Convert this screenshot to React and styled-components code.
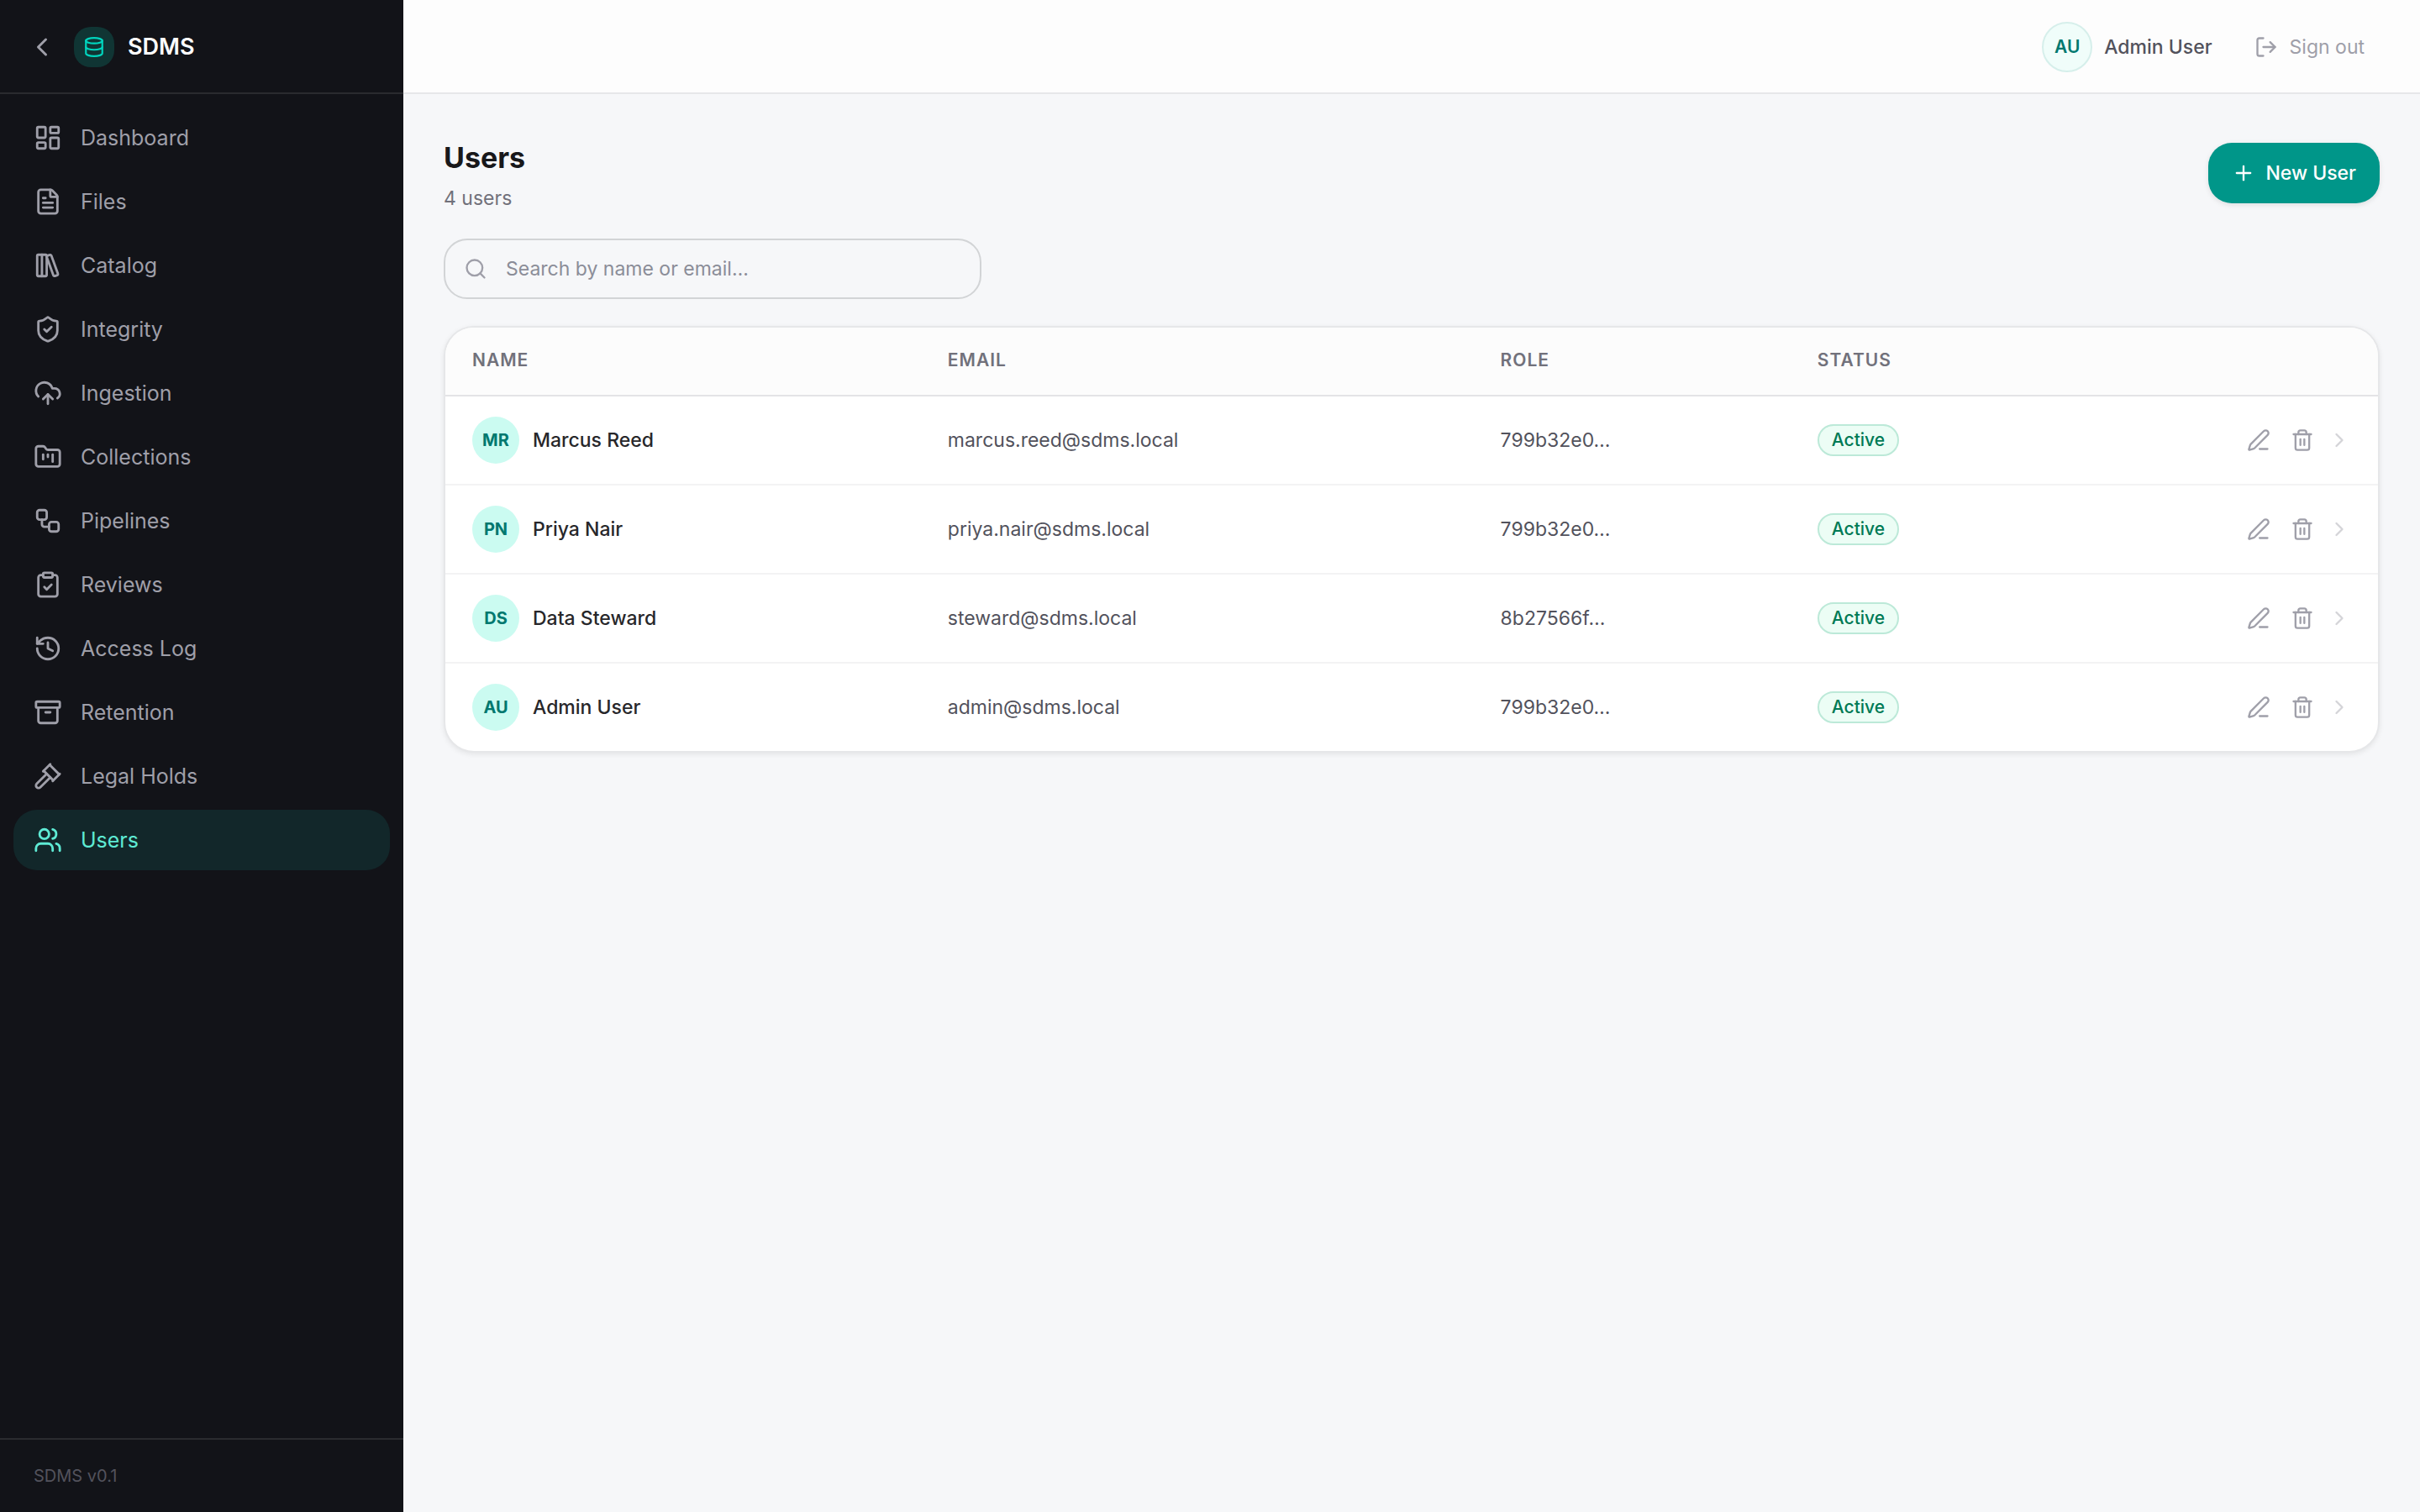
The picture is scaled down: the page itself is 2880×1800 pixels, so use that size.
import React, { useState } from "react";
import styled, { createGlobalStyle } from "styled-components";
import {
  Archive,
  ChevronLeft,
  ChevronRight,
  ClipboardCheck,
  CloudUpload,
  Database,
  FileText,
  FolderKanban,
  Gavel,
  History,
  LayoutDashboard,
  LibraryBig,
  LogOut,
  PenLine,
  Plus,
  Search,
  ShieldCheck,
  Trash2,
  Users,
  Workflow,
} from "lucide-react";

const GlobalStyle = createGlobalStyle`
  *, *::before, *::after { box-sizing: border-box; }
  body {
    margin: 0;
    background: #f6f7f9;
    color: #27272a;
    font-family: Inter, "Liberation Sans", sans-serif;
    font-size: 23px;
    line-height: 32px;
    -webkit-font-smoothing: antialiased;
  }
  button, input { font: inherit; color: inherit; }
  button { cursor: pointer; }
  svg { flex: none; display: block; }
`;

const Shell = styled.div`
  display: flex;
  min-height: 100vh;
`;

const Sidebar = styled.aside`
  position: sticky;
  top: 0;
  display: flex;
  flex-direction: column;
  flex: none;
  width: 480px;
  height: 100vh;
  background: #121318;
`;

const Brand = styled.div`
  display: flex;
  align-items: center;
  gap: 16px;
  height: 112px;
  padding: 2px 28px 0;
  border-bottom: 2px solid #2a2b2f;
`;

const CollapseButton = styled.button`
  display: grid;
  place-items: center;
  width: 44px;
  height: 44px;
  padding: 0;
  border: 0;
  background: none;
  color: #9f9fa9;
`;

const Logo = styled.span`
  display: grid;
  place-items: center;
  width: 48px;
  height: 48px;
  border-radius: 20px;
  background: #103534;
  color: #00d5be;
`;

const BrandName = styled.span`
  color: #ffffff;
  font-size: 27px;
  font-weight: 600;
`;

const Nav = styled.nav`
  display: flex;
  flex: 1;
  flex-direction: column;
  gap: 4px;
  padding: 16px;
`;

const NavLink = styled.a`
  display: flex;
  align-items: center;
  gap: 22px;
  height: 72px;
  padding: 0 24px;
  border-radius: 28px;
  background: ${(p) => (p.$active ? "#12272a" : "transparent")};
  color: ${(p) => (p.$active ? "#5eead4" : "#9f9fa9")};
  font-size: 25px;
  text-decoration: none;
`;

const SidebarFooter = styled.footer`
  padding: 28px 40px;
  border-top: 2px solid #2a2b2f;
  color: #52525c;
  font-size: 20px;
  line-height: 30px;
`;

const Page = styled.div`
  display: flex;
  flex: 1;
  flex-direction: column;
  min-width: 0;
`;

const TopBar = styled.header`
  display: flex;
  align-items: center;
  justify-content: flex-end;
  gap: 32px;
  height: 112px;
  padding: 2px 48px 0;
  border-bottom: 2px solid #e6e7e9;
  background: #fdfdfd;
`;

const Account = styled.div`
  display: flex;
  align-items: center;
  gap: 14px;
  color: #52525c;
  font-weight: 500;
`;

const Avatar = styled.span`
  display: grid;
  place-items: center;
  flex: none;
  width: ${(p) => (p.$outlined ? 60 : 56)}px;
  height: ${(p) => (p.$outlined ? 60 : 56)}px;
  border: ${(p) => (p.$outlined ? "2px solid #d6efeb" : "0")};
  border-radius: 50%;
  background: ${(p) => (p.$outlined ? "#f0fdfa" : "#cbfbf1")};
  color: #00786f;
  font-size: ${(p) => (p.$outlined ? 21 : 20)}px;
  font-weight: ${(p) => (p.$outlined ? 600 : 700)};
`;

const SignOut = styled.button`
  display: flex;
  align-items: center;
  gap: 14px;
  padding: 12px 18px;
  border: 0;
  background: none;
  color: #9f9fa9;
`;

const Content = styled.main`
  display: flex;
  flex-direction: column;
  gap: 32px;
  padding: 48px;
`;

const PageHeader = styled.div`
  display: flex;
  align-items: center;
  justify-content: space-between;
`;

const Heading = styled.div`
  display: flex;
  flex-direction: column;
  gap: 4px;
`;

const Title = styled.h1`
  margin: 0;
  color: #18181b;
  font-size: 34px;
  font-weight: 700;
  line-height: 56px;
`;

const Subtitle = styled.p`
  margin: 0;
  color: #71717b;
`;

const PrimaryButton = styled.button`
  display: flex;
  align-items: center;
  gap: 12px;
  height: 72px;
  padding: 0 28px;
  border: 0;
  border-radius: 28px;
  background: #009689;
  box-shadow: 0 2px 6px rgba(0, 0, 0, 0.1);
  color: #ffffff;
  font-weight: 500;
`;

const SearchBox = styled.label`
  display: flex;
  align-items: center;
  gap: 22px;
  width: 100%;
  max-width: 640px;
  height: 72px;
  padding: 0 22px;
  border: 2px solid #d2d4d6;
  border-radius: 28px;
  color: #9f9fa9;
`;

const SearchInput = styled.input`
  flex: 1;
  min-width: 0;
  padding: 0;
  border: 0;
  outline: 0;
  background: transparent;
  color: #27272a;
  &::placeholder {
    color: #8b8d98;
    opacity: 1;
  }
`;

const Card = styled.div`
  overflow: hidden;
  border: 2px solid #e6e7e9;
  border-radius: 36px;
  background: #ffffff;
  box-shadow: 0 2px 6px rgba(0, 0, 0, 0.08);
`;

const Table = styled.table`
  width: 100%;
  border-collapse: separate;
  border-spacing: 0;
  table-layout: fixed;
  text-align: left;
`;

const HeadCell = styled.th`
  width: ${(p) => p.$width || "auto"};
  padding: 25px 32px 27px;
  border-bottom: 2px solid #e4e4e6;
  background: #fcfcfc;
  color: #71717b;
  font-size: 21px;
  font-weight: 600;
  line-height: 28px;
  letter-spacing: 1px;
  text-transform: uppercase;
`;

const Cell = styled.td`
  padding: 24px 32px;
  color: #52525c;
  tr:not(:last-child) > & {
    border-bottom: 2px solid #f3f3f4;
  }
`;

const Person = styled.div`
  display: flex;
  align-items: center;
  gap: 16px;
  color: #27272a;
  font-weight: 500;
`;

const StatusBadge = styled.span`
  display: flex;
  align-items: center;
  width: fit-content;
  height: 38px;
  padding: 0 15px;
  border: 2px solid #bce9d8;
  border-radius: 19px;
  background: #ecfdf5;
  color: #007a55;
  font-size: 21px;
  font-weight: 500;
`;

const Actions = styled.div`
  display: flex;
  align-items: center;
  justify-content: flex-end;
  gap: 8px;
  color: #d4d4d8;
`;

const IconButton = styled.button`
  padding: 8px;
  border: 0;
  background: none;
  color: #9f9fa9;
`;

const NAV_ITEMS = [
  ["Dashboard", LayoutDashboard],
  ["Files", FileText],
  ["Catalog", LibraryBig],
  ["Integrity", ShieldCheck],
  ["Ingestion", CloudUpload],
  ["Collections", FolderKanban],
  ["Pipelines", Workflow],
  ["Reviews", ClipboardCheck],
  ["Access Log", History],
  ["Retention", Archive],
  ["Legal Holds", Gavel],
  ["Users", Users],
];

const USERS = [
  { initials: "MR", name: "Marcus Reed", email: "marcus.reed@sdms.local", role: "799b32e0…" },
  { initials: "PN", name: "Priya Nair", email: "priya.nair@sdms.local", role: "799b32e0…" },
  { initials: "DS", name: "Data Steward", email: "steward@sdms.local", role: "8b27566f…" },
  { initials: "AU", name: "Admin User", email: "admin@sdms.local", role: "799b32e0…" },
];

function UserRow({ user }) {
  return (
    <tr>
      <Cell>
        <Person>
          <Avatar>{user.initials}</Avatar>
          {user.name}
        </Person>
      </Cell>
      <Cell>{user.email}</Cell>
      <Cell>{user.role}</Cell>
      <Cell>
        <StatusBadge>Active</StatusBadge>
      </Cell>
      <Cell>
        <Actions>
          <IconButton type="button" aria-label={`Edit ${user.name}`}>
            <PenLine size={28} strokeWidth={2} />
          </IconButton>
          <IconButton type="button" aria-label={`Delete ${user.name}`}>
            <Trash2 size={28} strokeWidth={2} />
          </IconButton>
          <ChevronRight size={28} strokeWidth={2} />
        </Actions>
      </Cell>
    </tr>
  );
}

export default function App() {
  const [query, setQuery] = useState("");
  const needle = query.trim().toLowerCase();
  const visible = USERS.filter((u) => `${u.name} ${u.email}`.toLowerCase().includes(needle));

  return (
    <>
      <GlobalStyle />
      <Shell>
        <Sidebar>
          <Brand>
            <CollapseButton type="button" aria-label="Collapse sidebar">
              <ChevronLeft size={36} strokeWidth={2} />
            </CollapseButton>
            <Logo>
              <Database size={26} strokeWidth={2} />
            </Logo>
            <BrandName>SDMS</BrandName>
          </Brand>
          <Nav>
            {NAV_ITEMS.map(([label, Icon]) => (
              <NavLink
                key={label}
                href="#"
                $active={label === "Users"}
                aria-current={label === "Users" ? "page" : undefined}
              >
                <Icon size={34} strokeWidth={2} />
                {label}
              </NavLink>
            ))}
          </Nav>
          <SidebarFooter>SDMS v0.1</SidebarFooter>
        </Sidebar>
        <Page>
          <TopBar>
            <Account>
              <Avatar $outlined>AU</Avatar>
              Admin User
            </Account>
            <SignOut type="button">
              <LogOut size={28} strokeWidth={2} />
              Sign out
            </SignOut>
          </TopBar>
          <Content>
            <PageHeader>
              <Heading>
                <Title>Users</Title>
                <Subtitle>4 users</Subtitle>
              </Heading>
              <PrimaryButton type="button">
                <Plus size={28} strokeWidth={2} />
                New User
              </PrimaryButton>
            </PageHeader>
            <SearchBox>
              <Search size={28} strokeWidth={2} />
              <SearchInput
                type="text"
                aria-label="Search users"
                placeholder="Search by name or email…"
                value={query}
                onChange={(e) => setQuery(e.target.value)}
              />
            </SearchBox>
            <Card>
              <Table>
                <thead>
                  <tr>
                    <HeadCell $width="24.6%">Name</HeadCell>
                    <HeadCell $width="28.6%">Email</HeadCell>
                    <HeadCell $width="16.4%">Role</HeadCell>
                    <HeadCell $width="12%">Status</HeadCell>
                    <HeadCell aria-label="Actions" />
                  </tr>
                </thead>
                <tbody>
                  {visible.map((user) => (
                    <UserRow key={user.email} user={user} />
                  ))}
                </tbody>
              </Table>
            </Card>
          </Content>
        </Page>
      </Shell>
    </>
  );
}
